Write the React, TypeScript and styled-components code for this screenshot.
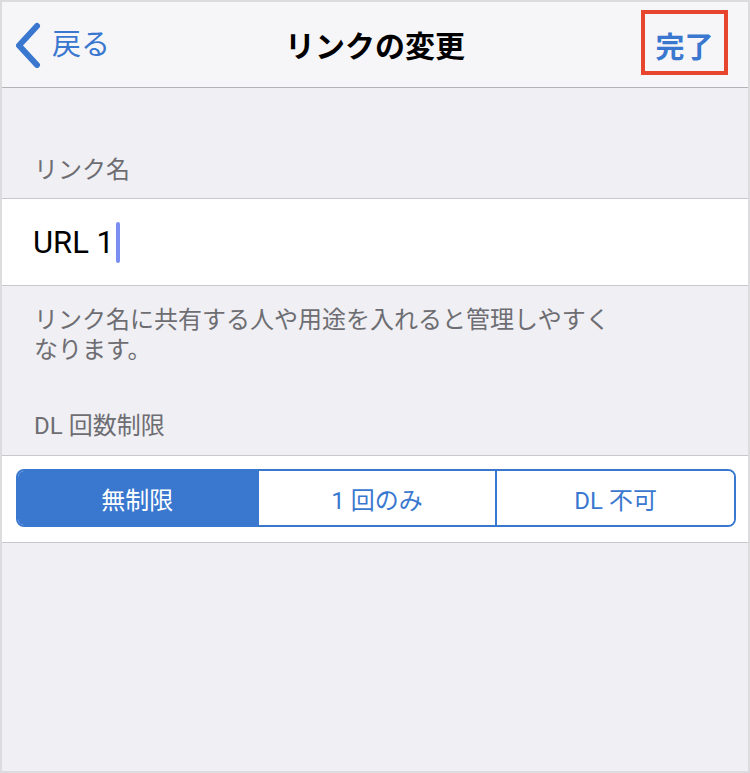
import React, { useState } from 'react'
import styled, { createGlobalStyle } from 'styled-components'

const BLUE = '#3a78d0'
const FONT = `Roboto, "Noto Sans CJK JP", sans-serif`

const GlobalStyle = createGlobalStyle`
  html, body {
    margin: 0;
    padding: 0;
    background: #ffffff;
  }
  * {
    box-sizing: border-box;
  }
`

const options = ['無制限', '1 回のみ', 'DL 不可']

const App = () => {
  const [selected, setSelected] = useState<number>(0)

  return (
    <>
      <GlobalStyle />
      <Frame>
        <NavBar>
          <BackButton>
            <svg width="30" height="46" viewBox="0 0 30 46">
              <path
                d="M24 4 L6 23.5 L24 43"
                fill="none"
                stroke={BLUE}
                strokeWidth="6"
                strokeLinecap="round"
                strokeLinejoin="round"
              />
            </svg>
            <span>戻る</span>
          </BackButton>
          <Title>リンクの変更</Title>
          <DoneCell>
            <DoneButton>完了</DoneButton>
          </DoneCell>
        </NavBar>

        <SectionHeader top={67} bottom={13}>リンク名</SectionHeader>
        <InputRow>
          <InputText>URL 1</InputText>
          <Caret />
        </InputRow>
        <SectionFooter>
          リンク名に共有する人や用途を入れると管理しやすくなります。
        </SectionFooter>

        <SectionHeader top={46} bottom={14}>DL 回数制限</SectionHeader>
        <SegmentRow>
          <Segmented>
            {options.map((label, i) => (
              <Segment key={label} active={i === selected} onClick={() => setSelected(i)}>
                {label}
              </Segment>
            ))}
          </Segmented>
        </SegmentRow>
      </Frame>
    </>
  )
}

const Frame = styled.div`
  width: 750px;
  height: 773px;
  border: 2px solid #dcdcde;
  background: #efeff4;
  display: flex;
  flex-direction: column;
  font-family: ${FONT};
  overflow: hidden;
`

const NavBar = styled.header`
  height: 86px;
  flex-shrink: 0;
  background: #f6f6f8;
  border-bottom: 1px solid #b4b4b8;
  display: grid;
  grid-template-columns: 1fr auto 1fr;
  align-items: center;
`

const BackButton = styled.div`
  display: flex;
  align-items: center;
  gap: 9px;
  padding-left: 11px;
  color: ${BLUE};
  font-size: 29px;
  line-height: 1;
  span {
    margin-top: 2px;
  }
`

const Title = styled.h1`
  margin: 0;
  font-size: 30px;
  font-weight: 700;
  color: #000000;
  margin-top: -1px;
`

const DoneCell = styled.div`
  display: flex;
  justify-content: flex-end;
  padding-right: 20px;
`

const DoneButton = styled.div`
  width: 87px;
  height: 65px;
  margin-top: -5px;
  border: 4px solid #e8452f;
  display: flex;
  align-items: center;
  justify-content: center;
  color: ${BLUE};
  font-size: 29px;
  font-weight: 700;
  padding-top: 5px;
`

const SectionHeader = styled.div<{ top: number; bottom: number }>`
  padding: ${props => props.top}px 32px ${props => props.bottom}px;
  font-size: 24px;
  line-height: 30px;
  color: #6d6d72;
`

const InputRow = styled.div`
  height: 88px;
  flex-shrink: 0;
  background: #ffffff;
  border-top: 1px solid #c8c7cc;
  border-bottom: 1px solid #c8c7cc;
  display: flex;
  align-items: center;
  padding-left: 31px;
`

const InputText = styled.span`
  font-size: 31px;
  color: #000000;
  line-height: 1;
`

const Caret = styled.span`
  width: 4px;
  height: 41px;
  border-radius: 2px;
  background: #7b8ef2;
  margin-left: 2px;
`

const SectionFooter = styled.div`
  padding: 19px 32px 0;
  max-width: 660px;
  font-size: 24px;
  line-height: 30px;
  color: #6d6d72;
`

const SegmentRow = styled.div`
  flex-shrink: 0;
  background: #ffffff;
  border-top: 1px solid #c8c7cc;
  border-bottom: 1px solid #c8c7cc;
  padding: 13px 12px 15px 14px;
`

const Segmented = styled.div`
  height: 58px;
  border: 2px solid ${BLUE};
  border-radius: 8px;
  overflow: hidden;
  display: grid;
  grid-template-columns: repeat(3, 1fr);
`

const Segment = styled.div<{ active: boolean }>`
  display: flex;
  align-items: center;
  justify-content: center;
  font-size: 24px;
  cursor: pointer;
  background: ${props => (props.active ? BLUE : '#ffffff')};
  color: ${props => (props.active ? '#ffffff' : BLUE)};
  & + & {
    border-left: 2px solid ${BLUE};
  }
`

export default App
